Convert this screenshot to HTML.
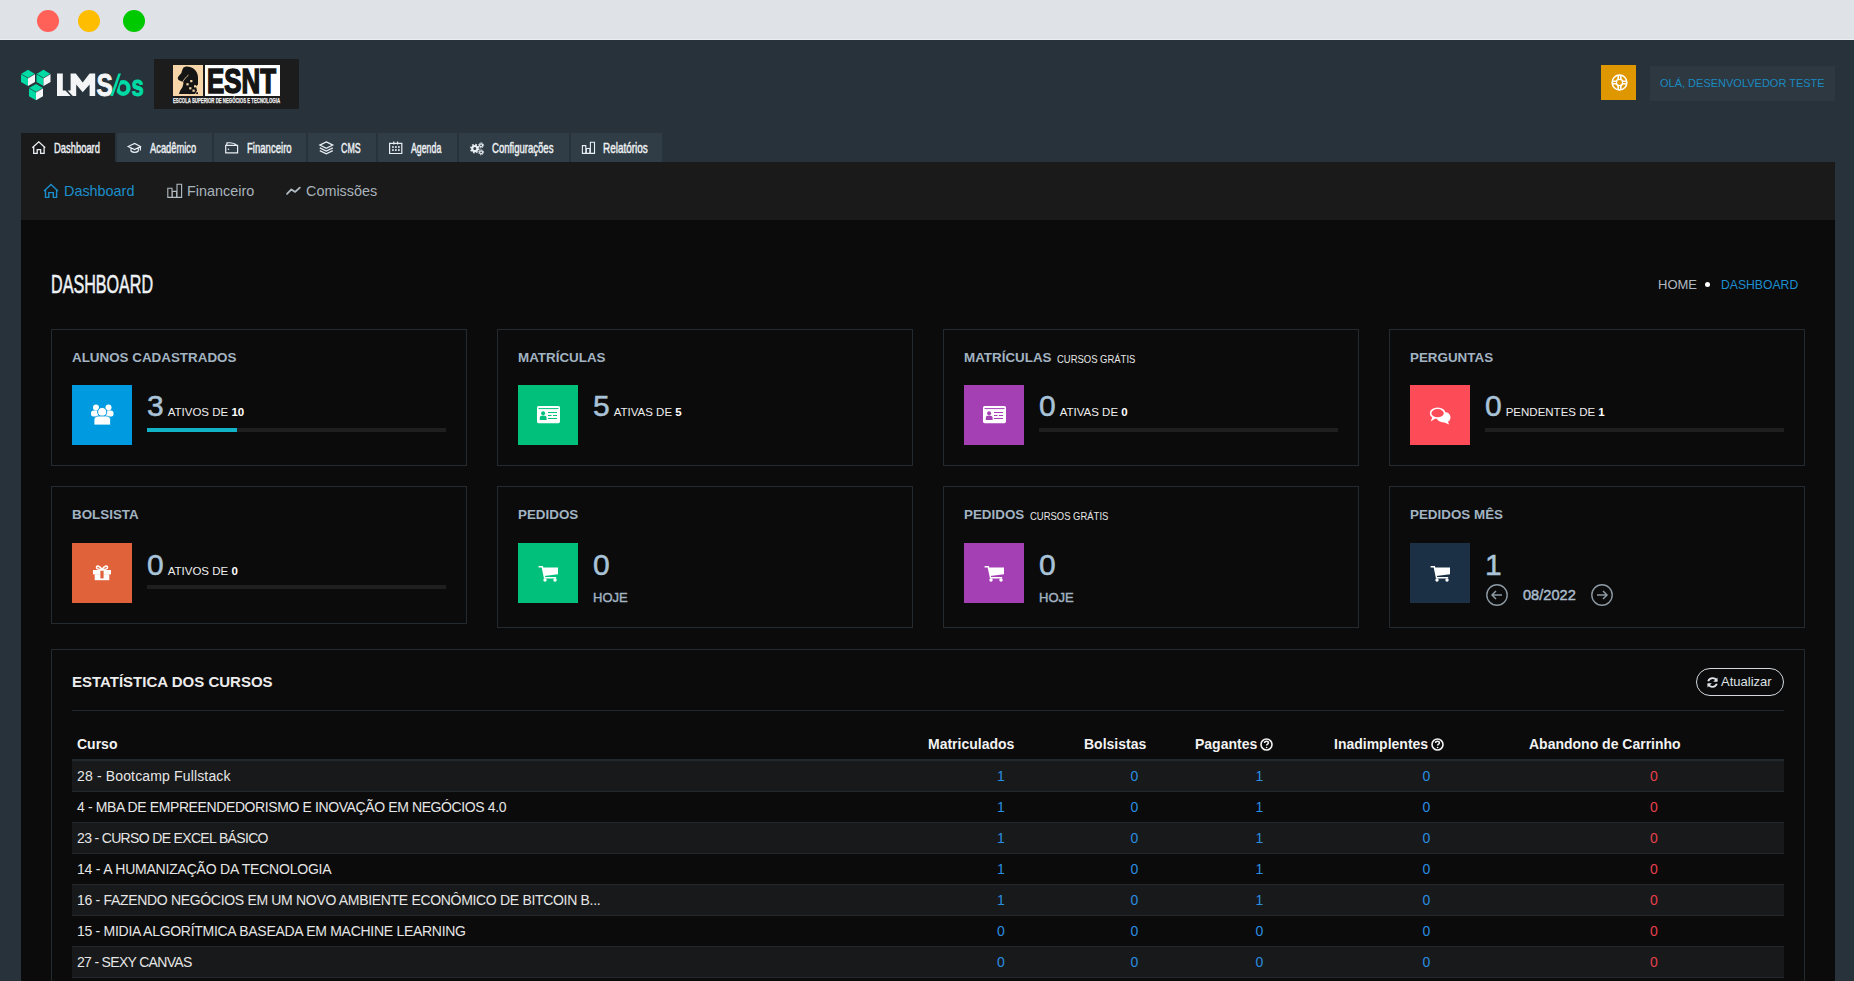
<!DOCTYPE html>
<html><head><meta charset="utf-8">
<style>
*{margin:0;padding:0;box-sizing:border-box}
html,body{width:1854px;height:981px;overflow:hidden}
body{background:#27323a;font-family:"Liberation Sans",sans-serif;position:relative}
.a{position:absolute;white-space:nowrap;line-height:1}
#chrome{position:absolute;left:0;top:0;width:1854px;height:40px;background:#dfe2e7;border-bottom:1px solid #eceef1}
.dot{position:absolute;top:10px;width:22px;height:22px;border-radius:50%}
.tab{position:absolute;top:133px;height:29px;background:#303d46}
.tab.act{background:#1a1a1a}
.tab svg{position:absolute;top:9px}
.tt{position:absolute;top:8px;font-weight:normal;-webkit-text-stroke:0.45px #eef1f4;font-size:14.4px;color:#eef1f4;transform-origin:0 0;transform:scaleX(0.635);line-height:1}
#panel{position:absolute;left:21px;top:162px;width:1814px;height:830px;background:#0b0b0b}
#subnav{position:absolute;left:0;top:0;width:1814px;height:58px;background:#1a1a1a}
.card{position:absolute;width:416px;border:1px solid #232b31;background:#0b0b0b}
.ctitle{position:absolute;left:20px;top:21px;font-size:13.4px;font-weight:bold;color:#a2b3c2;line-height:1;white-space:nowrap}
.ctitle small{font-size:11px;font-weight:normal;color:#e6e6e6;display:inline-block;transform:scaleX(0.86);transform-origin:0 50%;margin-left:2px;position:relative;top:1px}
.ibox{position:absolute;left:20px;top:55px;width:60px;height:60px}
.ibox svg{position:absolute;left:0;top:0}
.big{position:absolute;left:95px;font-size:30px;color:#a9c3d8;line-height:1;-webkit-text-stroke:0.5px #a9c3d8}
.big .sub{-webkit-text-stroke:0}
.sub{font-size:11.5px;color:#eeeeee;text-transform:uppercase;margin-left:4px}
.sub b{color:#fff}
.bar{position:absolute;left:95px;width:299px;height:4px;background:#1f1f1f}
.hoje{position:absolute;left:95px;top:104px;font-size:13px;font-weight:normal;-webkit-text-stroke:0.4px #a2b3c2;color:#a2b3c2;line-height:1}
.circ{position:absolute;width:22px;height:22px}
.bar i{display:block;height:4px;background:#12b3c6}
#tb{border-collapse:collapse;table-layout:fixed}
#tb th{font-size:14px;font-weight:bold;color:#f2f2f2;text-align:left;padding:5px 5px 0;height:28px;vertical-align:top;border-bottom:2px solid #22292e;white-space:nowrap}
#tb td{font-size:14px;color:#e6e6e6;height:31px;padding:0 5px;border-top:1px solid #22292e;white-space:nowrap;line-height:30px}
#tb tr.odd td{background:#18191a}
#tb td.v{text-align:center;color:#2a8ee0}
#tb td.r{text-align:center;color:#e5404c}
</style></head><body>
<div id="chrome">
  <div class="dot" style="left:37px;background:#ff6058"></div>
  <div class="dot" style="left:78px;background:#ffbd00"></div>
  <div class="dot" style="left:123px;background:#00c900"></div>
</div>
<!-- LOGO -->
<svg class="a" style="left:20px;top:68px" width="126" height="34" viewBox="0 0 126 34">
  <g>
    <polygon points="8,1.7 15,5.9 8,9.9 1,5.9" fill="#00dba5"/>
    <polygon points="1,5.9 8,9.9 8,18 1,14" fill="#00dba5"/>
    <polygon points="8,9.9 15,5.9 15,14 8,18" fill="#f3f5f7"/>
    <path d="M1,5.9 L8,10.1 L15,5.9" fill="none" stroke="#17352f" stroke-width="0.55"/>
  </g>
  <g transform="translate(15.5,0)">
    <polygon points="8,1.7 15,5.9 8,9.9 1,5.9" fill="#00dba5"/>
    <polygon points="1,5.9 8,9.9 8,18 1,14" fill="#00dba5"/>
    <polygon points="8,9.9 15,5.9 15,14 8,18" fill="#f3f5f7"/>
    <path d="M1,5.9 L8,10.1 L15,5.9" fill="none" stroke="#17352f" stroke-width="0.55"/>
  </g>
  <g transform="translate(8,14.2)">
    <polygon points="8,1.7 15,5.9 8,9.9 1,5.9" fill="#00dba5"/>
    <polygon points="1,5.9 8,9.9 8,18 1,14" fill="#00dba5"/>
    <polygon points="8,9.9 15,5.9 15,14 8,18" fill="#f3f5f7"/>
    <path d="M1,5.9 L8,10.1 L15,5.9" fill="none" stroke="#17352f" stroke-width="0.55"/>
  </g>
  <polygon points="37.0,5.6 42.8,5.6 42.8,22.4 45.5,22.4 50.6,27.9 37.0,27.9" fill="#f3f5f7"/>
  <polygon points="50.6,5.6 55.8,5.6 62.7,14.6 69.6,5.6 75.2,5.6 75.2,27.9 69.6,27.9 69.6,16.4 62.7,24.2 56.2,16.6 56.2,27.9 52.8,27.9 47.6,22.4 50.6,22.4" fill="#f3f5f7"/>
  <text x="76.5" y="28.2" font-family="Liberation Sans" font-weight="bold" font-size="32" fill="#f3f5f7" stroke="#f3f5f7" stroke-width="0.8" textLength="16.3" lengthAdjust="spacingAndGlyphs">S</text>
  <ellipse cx="103.1" cy="20" rx="5.4" ry="5.9" fill="none" stroke="#00dba5" stroke-width="4.3"/>
  <polygon points="93,28 94.8,28 102.8,5.4 101,5.4" fill="#27323a"/>
  <polygon points="90.3,28 93,28 101,5.4 98.3,5.4" fill="#00dba5"/>
  <text x="111.5" y="28" font-family="Liberation Sans" font-weight="bold" font-size="29" fill="#00dba5" stroke="#00dba5" stroke-width="0.9" textLength="12.3" lengthAdjust="spacingAndGlyphs">s</text>
</svg>
<!-- ESNT -->
<div class="a" style="left:154px;top:59px;width:145px;height:50px;background:#1c1c1c">
  <div class="a" style="left:19px;top:6px;width:30px;height:31px;background:#f8d5a9"></div>
  <svg class="a" style="left:19px;top:6px" width="30" height="31" viewBox="0 0 30 31">
    <path d="M10.5,2.5 L13,1.6 C19,1.3 24.5,5 25,12 L25,19.5 L23,21.5 L24,25.5 L22,29 L6,29 C6.5,26 8,24.5 9.5,22 C10,20 10.5,18.5 10.5,17.5 C9,16.5 7.5,15.8 6,15.2 C4.6,14.6 4.4,12.6 5.4,11.5 L8.4,8 C9,6 9.5,4 10.5,2.5 Z" fill="#151515"/>
    <path d="M9.5,17 C11.5,14 13.5,11.5 15.5,10" fill="none" stroke="#f8d5a9" stroke-width="0.8"/>
    <g fill="#f8d5a9"><rect x="17.2" y="15" width="2.2" height="2.2"/><rect x="13.4" y="18.2" width="2.2" height="2.2"/><rect x="21" y="20.2" width="2.2" height="2.2"/><rect x="16.2" y="22.2" width="2.2" height="2.2"/><rect x="19.5" y="24.6" width="2.2" height="2.2"/></g>
    <g fill="#151515"><rect x="15.8" y="27.3" width="1.8" height="1.8"/><rect x="23.2" y="27.3" width="1.8" height="1.8"/></g>
  </svg>
  <div class="a" style="left:51px;top:6px;width:75px;height:31px;background:#ffffff"></div>
  <svg class="a" style="left:0;top:0" width="145" height="50" viewBox="0 0 145 50">
  <text x="53" y="34" font-family="Liberation Sans" font-weight="bold" font-size="34.9" fill="#151515" stroke="#151515" stroke-width="1.6" textLength="69" lengthAdjust="spacingAndGlyphs">ESNT</text>
  <text x="19" y="44" font-family="Liberation Sans" font-weight="bold" font-size="6.6" fill="#f2f2f2" stroke="#f2f2f2" stroke-width="0.25" textLength="107" lengthAdjust="spacingAndGlyphs">ESCOLA SUPERIOR DE NEGÓCIOS E TECNOLOGIA</text>
  </svg>
</div>
<!-- help + user -->
<div class="a" style="left:1601px;top:65px;width:35px;height:35px;background:#df9700">
  <svg class="a" style="left:0;top:0" width="35" height="35" viewBox="0 0 35 35">
    <circle cx="18.5" cy="17.5" r="7.4" fill="none" stroke="#fff" stroke-width="1.5"/>
    <circle cx="18.5" cy="17.5" r="3.2" fill="none" stroke="#fff" stroke-width="1.5"/>
    <path d="M18.5,10.5V14.5M18.5,20.5V24.5M11.5,17.5H15.5M21.5,17.5H25.5" stroke="#fff" stroke-width="4.2"/>
    <path d="M18.5,11V14M18.5,21V24M12,17.5H15M22,17.5H25" stroke="#df9500" stroke-width="0.9"/>
  </svg>
</div>
<div class="a" style="left:1650px;top:66px;width:185px;height:35px;background:#2d3840">
  <div class="a" style="left:10px;top:12px;font-size:11px;color:#1a8ac0">OLÁ, DESENVOLVEDOR TESTE</div>
</div>

<!-- TABS -->
<div class="tab act" style="left:21px;width:94px">
  <div class="tt" style="left:33px;transform:scaleX(0.653)">Dashboard</div>
</div>
<div class="tab" style="left:117px;width:95px">
  <div class="tt" style="left:32.5px;transform:scaleX(0.648)">Acadêmico</div>
</div>
<div class="tab" style="left:214px;width:92px">
  <div class="tt" style="left:32.5px;transform:scaleX(0.665)">Financeiro</div>
</div>
<div class="tab" style="left:308px;width:68px">
  <div class="tt" style="left:33px;transform:scaleX(0.614)">CMS</div>
</div>
<div class="tab" style="left:378px;width:79px">
  <div class="tt" style="left:32.5px;transform:scaleX(0.61)">Agenda</div>
</div>
<div class="tab" style="left:459px;width:110px">
  <div class="tt" style="left:33px;transform:scaleX(0.662)">Configurações</div>
</div>
<div class="tab" style="left:571px;width:91px">
  <div class="tt" style="left:32.3px;transform:scaleX(0.692)">Relatórios</div>
</div>

<div id="panel">
  <div id="subnav">
    <div class="a" style="left:43px;top:22px;font-size:14.4px;color:#1a8fcc">Dashboard</div>
    <div class="a" style="left:166px;top:22px;font-size:14.4px;color:#a9b3bb">Financeiro</div>
    <div class="a" style="left:285px;top:22px;font-size:14.4px;color:#a9b3bb">Comissões</div>
  </div>
</div>
<svg class="a" style="left:0;top:0" width="1854" height="260" viewBox="0 0 1854 260" fill="none">
<g stroke="#e8eef2" stroke-width="1.3" stroke-linejoin="miter">
<path d="M32.3,147.8 L38.8,141.8 L45.2,147.8 M33.7,146.6 V153.3 H37.2 V149.6 H40.6 V153.3 H44.1 V146.6"/>
<path d="M128.2,146.5 L134.6,143.4 L140.4,146.5 L134.6,149.5 Z M131,147.9 V151 C132.6,152.8 136.7,152.8 138.3,151 V147.9 M140.4,146.5 V150.6" stroke-width="1.2"/>
<path d="M225.7,145.4 H237.6 V152.9 H225.7 Z M226.6,145.4 L227,142.9 C230.5,142.5 234.5,143.2 236.8,145.4" stroke-width="1.2"/>
<path d="M326.3,141.9 L332.8,145.1 L326.3,148.3 L319.8,145.1 Z M319.8,147.9 L326.3,151.1 L332.8,147.9 M319.8,150.6 L326.3,153.8 L332.8,150.6" stroke-width="1.2"/>
<path d="M389.6,143.4 H401.8 V153.5 H389.6 Z M393.8,141.4 V144.6 M397.6,141.4 V144.6" stroke-width="1.2"/>
<path d="M582.4,145.6 H585.8 V153.4 H582.4 Z M586.4,148.5 H589.8 V153.4 H586.4 Z M590.4,142.3 H594.5 V153.4 H590.4 Z" stroke-width="1.1"/>
</g>
<g fill="#e8eef2">
<rect x="392.1" y="146.2" width="1.7" height="1.7"/><rect x="395" y="146.2" width="1.7" height="1.7"/><rect x="398" y="146.2" width="1.7" height="1.7"/>
<rect x="392.1" y="149.2" width="1.7" height="1.7"/><rect x="395" y="149.2" width="1.7" height="1.7"/><rect x="398" y="149.2" width="1.7" height="1.7"/>
<circle cx="228.4" cy="149.2" r="0.8"/>
</g>
<g stroke="#e8eef2">
<circle cx="474.8" cy="148.6" r="2.6" stroke-width="2.2"/>
<circle cx="474.8" cy="148.6" r="4" stroke-width="1.6" stroke-dasharray="1.6 1.54"/>
<circle cx="481.1" cy="145.3" r="1.5" stroke-width="1.3"/>
<circle cx="481.1" cy="145.3" r="2.5" stroke-width="1" stroke-dasharray="1.1 0.86"/>
<circle cx="481.1" cy="152.3" r="1.5" stroke-width="1.3"/>
<circle cx="481.1" cy="152.3" r="2.5" stroke-width="1" stroke-dasharray="1.1 0.86"/>
</g>
<path d="M44,191 L51,184.5 L58,191 M45.5,189.6 V197.4 H48.8 V192.6 H53.3 V197.4 H56.6 V189.6" stroke="#1a8dcb" stroke-width="1.4"/>
<path d="M167.8,188.3 H172 V197.4 H167.8 Z M172.3,191.4 H176.6 V197.4 H172.3 Z M177,184.3 H181.6 V197.4 H177 Z" stroke="#b3bcc3" stroke-width="1.1"/>
<path d="M287,193.8 L291.4,189.4 L295.2,191.9 L299.8,187.7" stroke="#b3bcc3" stroke-width="1.8" stroke-linecap="round" stroke-linejoin="round"/>
</svg>
<div class="a" style="left:51px;top:270.5px;font-size:26px;color:#eef2f5;-webkit-text-stroke:0.55px #eef2f5;transform-origin:0 0;transform:scaleX(0.62)">DASHBOARD</div>
<div class="a" style="left:1658px;top:278px;font-size:13px;color:#b0b9c1">HOME</div><div class="a" style="left:1705px;top:282px;width:5px;height:5px;border-radius:50%;background:#fff"></div><div class="a" style="left:1721px;top:279px;font-size:12.2px;color:#1d8fd0">DASHBOARD</div>
<div class="card" style="left:51px;top:329px;height:137px"><div class="ctitle">ALUNOS CADASTRADOS</div><div class="ibox" style="background:#009ae0"><svg class="a" style="left:0;top:0" width="60" height="60" viewBox="0 0 60 60">
<circle cx="24" cy="22.5" r="3" fill="#fff"/><circle cx="36.5" cy="22.5" r="3" fill="#fff"/>
<rect x="19" y="25.5" width="8" height="6" rx="2.5" fill="#fff"/><rect x="33.5" y="25.5" width="8" height="6" rx="2.5" fill="#fff"/>
<circle cx="30.2" cy="27" r="4.6" fill="#fff" stroke="#009ae0" stroke-width="1"/>
<path d="M22,40 V35.5 C22,32 24,31 27,31 H33.5 C36.5,31 38.5,32 38.5,35.5 V40 Z" fill="#fff" stroke="#009ae0" stroke-width="0.8"/>
</svg></div><div class="big" style="top:61px">3<span class="sub">ATIVOS DE <b>10</b></span></div><div class="bar" style="top:98px"><i style="width:30%"></i></div></div>
<div class="card" style="left:497px;top:329px;height:137px"><div class="ctitle">MATRÍCULAS</div><div class="ibox" style="background:#00c07c"><svg class="a" style="left:0;top:0" width="60" height="60" viewBox="0 0 60 60">
<rect x="19" y="21" width="23" height="17.2" rx="1.6" fill="#fff"/>
<path d="M20.5,23.6 H40.5" stroke="#00c07c" stroke-width="1"/>
<circle cx="25.1" cy="28.2" r="2" fill="#00c07c"/>
<path d="M21.8,35 V33 C21.8,31 23,30.4 25,30.4 C27.2,30.4 28.6,31 28.6,33 V35 Z" fill="#00c07c"/>
<path d="M30,27.5 H39 M30,30.5 H33.5 M35,30.5 H39 M30,33.5 H39" stroke="#00c07c" stroke-width="1.1"/>
</svg></div><div class="big" style="top:61px">5<span class="sub">ATIVAS DE <b>5</b></span></div></div>
<div class="card" style="left:943px;top:329px;height:137px"><div class="ctitle">MATRÍCULAS <small>CURSOS GRÁTIS</small></div><div class="ibox" style="background:#a440b4"><svg class="a" style="left:0;top:0" width="60" height="60" viewBox="0 0 60 60">
<rect x="19" y="21" width="23" height="17.2" rx="1.6" fill="#fff"/>
<path d="M20.5,23.6 H40.5" stroke="#a440b4" stroke-width="1"/>
<circle cx="25.1" cy="28.2" r="2" fill="#a440b4"/>
<path d="M21.8,35 V33 C21.8,31 23,30.4 25,30.4 C27.2,30.4 28.6,31 28.6,33 V35 Z" fill="#a440b4"/>
<path d="M30,27.5 H39 M30,30.5 H33.5 M35,30.5 H39 M30,33.5 H39" stroke="#a440b4" stroke-width="1.1"/>
</svg></div><div class="big" style="top:61px">0<span class="sub">ATIVAS DE <b>0</b></span></div><div class="bar" style="top:98px"><i style="width:0%"></i></div></div>
<div class="card" style="left:1389px;top:329px;height:137px"><div class="ctitle">PERGUNTAS</div><div class="ibox" style="background:#fe4b58"><svg class="a" style="left:0;top:0" width="60" height="60" viewBox="0 0 60 60">
<path d="M34.5,27 C38.5,27 40.5,30 40.5,32.5 C40.5,34.5 39.5,35.8 38,36.6 L39,39.5 L34.5,37.5 C31,37.5 28,36 27,34 Z" fill="#fff"/>
<ellipse cx="27.6" cy="28.2" rx="7" ry="4.9" fill="#fe4b58" stroke="#fff" stroke-width="1.6"/>
<path d="M22.5,31.5 L20.8,36.5 L26,33" fill="#fff"/>
</svg></div><div class="big" style="top:61px">0<span class="sub">PENDENTES DE <b>1</b></span></div><div class="bar" style="top:98px"><i style="width:0%"></i></div></div>
<div class="card" style="left:51px;top:486px;height:138px"><div class="ctitle">BOLSISTA</div><div class="ibox" style="top:56px;background:#df623a"><svg class="a" style="left:0;top:0" width="60" height="60" viewBox="0 0 60 60">
<rect x="21" y="27" width="18" height="4.4" fill="#fff"/>
<rect x="22.7" y="31.2" width="14.6" height="6" fill="#fff"/>
<rect x="28.4" y="27.6" width="3.2" height="7.8" fill="#df623a"/>
<path d="M30,26.5 C28,23 24.5,22 24.5,24.5 C24.5,26.2 27,26.5 30,26.5 C33,26.5 35.5,26.2 35.5,24.5 C35.5,22 32,23 30,26.5 Z" fill="none" stroke="#fff" stroke-width="1.5"/>
</svg></div><div class="big" style="top:62.5px">0<span class="sub">ATIVOS DE <b>0</b></span></div><div class="bar" style="top:98px"><i style="width:0%"></i></div></div>
<div class="card" style="left:497px;top:486px;height:142px"><div class="ctitle">PEDIDOS</div><div class="ibox" style="top:56px;background:#00c07c"><svg class="a" style="left:0;top:0" width="60" height="60" viewBox="0 0 60 60">
<path d="M20.6,23.8 H24.3 L26.6,34.8 H38.2" fill="none" stroke="#fff" stroke-width="1.5"/>
<path d="M24.6,24.6 H40 V31.3 L26.2,33 Z" fill="#fff"/>
<circle cx="27" cy="37" r="1.7" fill="#fff"/><circle cx="37" cy="37" r="1.7" fill="#fff"/>
</svg></div><div class="big" style="top:62.5px">0</div><div class="hoje">HOJE</div></div>
<div class="card" style="left:943px;top:486px;height:142px"><div class="ctitle">PEDIDOS <small>CURSOS GRÁTIS</small></div><div class="ibox" style="top:56px;background:#a440b4"><svg class="a" style="left:0;top:0" width="60" height="60" viewBox="0 0 60 60">
<path d="M20.6,23.8 H24.3 L26.6,34.8 H38.2" fill="none" stroke="#fff" stroke-width="1.5"/>
<path d="M24.6,24.6 H40 V31.3 L26.2,33 Z" fill="#fff"/>
<circle cx="27" cy="37" r="1.7" fill="#fff"/><circle cx="37" cy="37" r="1.7" fill="#fff"/>
</svg></div><div class="big" style="top:62.5px">0</div><div class="hoje">HOJE</div></div>
<div class="card" style="left:1389px;top:486px;height:142px"><div class="ctitle">PEDIDOS MÊS</div><div class="ibox" style="top:56px;background:#1b3045"><svg class="a" style="left:0;top:0" width="60" height="60" viewBox="0 0 60 60">
<path d="M20.6,23.8 H24.3 L26.6,34.8 H38.2" fill="none" stroke="#fff" stroke-width="1.5"/>
<path d="M24.6,24.6 H40 V31.3 L26.2,33 Z" fill="#fff"/>
<circle cx="27" cy="37" r="1.7" fill="#fff"/><circle cx="37" cy="37" r="1.7" fill="#fff"/>
</svg></div><div class="big" style="top:62.5px">1</div><div class="circ" style="left:96px;top:97px"><svg width="22" height="22" viewBox="0 0 22 22"><circle cx="11" cy="11" r="10.2" fill="none" stroke="#8c99a3" stroke-width="1.4"/><path d="M6,11 H16 M10,7 L6,11 L10,15" fill="none" stroke="#8c99a3" stroke-width="1.5"/></svg></div>
<div class="a" style="left:133px;top:101px;font-size:14.6px;font-weight:normal;-webkit-text-stroke:0.45px #aabccb;color:#aabccb">08/2022</div>
<div class="circ" style="left:201px;top:97px"><svg width="22" height="22" viewBox="0 0 22 22"><circle cx="11" cy="11" r="10.2" fill="none" stroke="#8c99a3" stroke-width="1.4"/><path d="M6,11 H16 M12,7 L16,11 L12,15" fill="none" stroke="#8c99a3" stroke-width="1.5"/></svg></div></div>
<div class="a" style="left:51px;top:649px;width:1754px;height:400px;border:1px solid #232b31;background:#0b0b0b">
<div class="a" style="left:20px;top:24px;font-size:15px;font-weight:bold;color:#ececec">ESTATÍSTICA DOS CURSOS</div>
<div class="a" style="left:1644px;top:18px;width:88px;height:28px;border:1.3px solid #d4d8dc;border-radius:14px;">
<svg class="a" style="left:9px;top:7px" width="13" height="13" viewBox="0 0 13 13"><path d="M10.8,5 A4.6,4.6 0 0 0 2.2,5.2 M2.2,8 A4.6,4.6 0 0 0 10.8,7.8" fill="none" stroke="#e0e4e8" stroke-width="1.8"/><path d="M11.5,1.5 V5.8 H7.2 Z M1.5,11.5 V7.2 H5.8 Z" fill="#e0e4e8"/></svg>
<div class="a" style="left:24px;top:6px;font-size:13px;color:#dfe3e6">Atualizar</div>
</div>
<div class="a" style="left:20px;top:60px;width:1712px;height:1px;background:#22292e"></div>
<table id="tb" style="position:absolute;left:20px;top:82px;width:1712px">
<colgroup><col style="width:851px"><col style="width:156px"><col style="width:111px"><col style="width:139px"><col style="width:195px"><col style="width:260px"></colgroup>
<thead><tr><th>Curso</th><th>Matriculados</th><th>Bolsistas</th><th>Pagantes<svg width="13" height="13" viewBox="0 0 13 13" style="vertical-align:-2px;margin-left:3px"><circle cx="6.5" cy="6.5" r="5.5" fill="none" stroke="#f2f2f2" stroke-width="1.6"/><path d="M4.6,5 C4.6,3.8 5.5,3.2 6.5,3.2 C7.6,3.2 8.4,3.9 8.4,4.9 C8.4,6.2 6.6,6.2 6.6,7.6" fill="none" stroke="#f2f2f2" stroke-width="1.5"/><circle cx="6.6" cy="9.5" r="0.8" fill="#f2f2f2"/></svg></th><th>Inadimplentes<svg width="13" height="13" viewBox="0 0 13 13" style="vertical-align:-2px;margin-left:3px"><circle cx="6.5" cy="6.5" r="5.5" fill="none" stroke="#f2f2f2" stroke-width="1.6"/><path d="M4.6,5 C4.6,3.8 5.5,3.2 6.5,3.2 C7.6,3.2 8.4,3.9 8.4,4.9 C8.4,6.2 6.6,6.2 6.6,7.6" fill="none" stroke="#f2f2f2" stroke-width="1.5"/><circle cx="6.6" cy="9.5" r="0.8" fill="#f2f2f2"/></svg></th><th>Abandono de Carrinho</th></tr></thead>
<tbody>
<tr class="odd"><td style="letter-spacing:0.15px">28 - Bootcamp Fullstack</td><td class="v">1</td><td class="v">0</td><td class="v">1</td><td class="v">0</td><td class="r">0</td></tr>
<tr><td style="letter-spacing:-0.391px">4 - MBA DE EMPREENDEDORISMO E INOVAÇÃO EM NEGÓCIOS 4.0</td><td class="v">1</td><td class="v">0</td><td class="v">1</td><td class="v">0</td><td class="r">0</td></tr>
<tr class="odd"><td style="letter-spacing:-0.66px">23 - CURSO DE EXCEL BÁSICO</td><td class="v">1</td><td class="v">0</td><td class="v">1</td><td class="v">0</td><td class="r">0</td></tr>
<tr><td style="letter-spacing:-0.21px">14 - A HUMANIZAÇÃO DA TECNOLOGIA</td><td class="v">1</td><td class="v">0</td><td class="v">1</td><td class="v">0</td><td class="r">0</td></tr>
<tr class="odd"><td style="letter-spacing:-0.317px">16 - FAZENDO NEGÓCIOS EM UM NOVO AMBIENTE ECONÔMICO DE BITCOIN B...</td><td class="v">1</td><td class="v">0</td><td class="v">1</td><td class="v">0</td><td class="r">0</td></tr>
<tr><td style="letter-spacing:-0.286px">15 - MIDIA ALGORÍTMICA BASEADA EM MACHINE LEARNING</td><td class="v">0</td><td class="v">0</td><td class="v">0</td><td class="v">0</td><td class="r">0</td></tr>
<tr class="odd"><td style="letter-spacing:-0.687px">27 - SEXY CANVAS</td><td class="v">0</td><td class="v">0</td><td class="v">0</td><td class="v">0</td><td class="r">0</td></tr>
<tr><td></td><td></td><td></td><td></td><td></td><td></td></tr></tbody></table></div>
</body></html>
